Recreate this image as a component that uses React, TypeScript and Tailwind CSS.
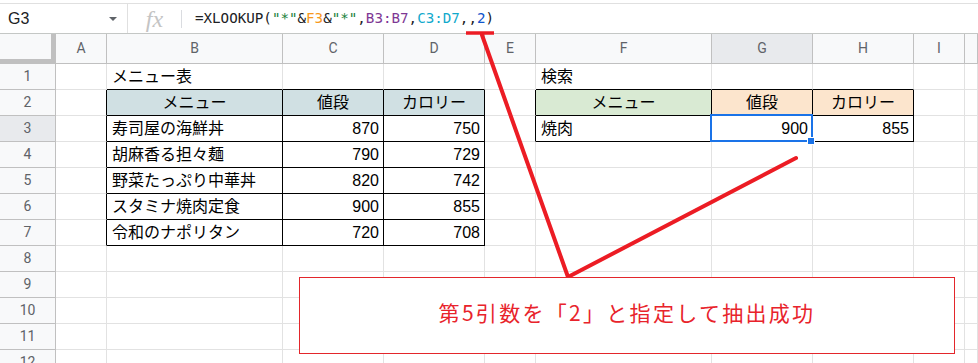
import React from 'react';

const COLS = ['', 'A', 'B', 'C', 'D', 'E', 'F', 'G', 'H', 'I', ''];
const ROWS = [1, 2, 3, 4, 5, 6, 7, 8, 9, 10, 11, 12];

type Cell = { text: string; align?: 'left' | 'right' | 'center'; bg?: string };

// cell contents keyed by "row-col"
const DATA: Record<string, Cell> = {
  '1-2': { text: 'メニュー表' },
  '2-2': { text: 'メニュー', align: 'center', bg: 'bg-[#d0e0e3]' },
  '2-3': { text: '値段', align: 'center', bg: 'bg-[#d0e0e3]' },
  '2-4': { text: 'カロリー', align: 'center', bg: 'bg-[#d0e0e3]' },
  '3-2': { text: '寿司屋の海鮮丼' },
  '3-3': { text: '870', align: 'right' },
  '3-4': { text: '750', align: 'right' },
  '4-2': { text: '胡麻香る担々麺' },
  '4-3': { text: '790', align: 'right' },
  '4-4': { text: '729', align: 'right' },
  '5-2': { text: '野菜たっぷり中華丼' },
  '5-3': { text: '820', align: 'right' },
  '5-4': { text: '742', align: 'right' },
  '6-2': { text: 'スタミナ焼肉定食' },
  '6-3': { text: '900', align: 'right' },
  '6-4': { text: '855', align: 'right' },
  '7-2': { text: '令和のナポリタン' },
  '7-3': { text: '720', align: 'right' },
  '7-4': { text: '708', align: 'right' },
  '1-6': { text: '検索' },
  '2-6': { text: 'メニュー', align: 'center', bg: 'bg-[#d9ead3]' },
  '2-7': { text: '値段', align: 'center', bg: 'bg-[#fce5cd]' },
  '2-8': { text: 'カロリー', align: 'center', bg: 'bg-[#fce5cd]' },
  '3-6': { text: '焼肉' },
  '3-7': { text: '900', align: 'right' },
  '3-8': { text: '855', align: 'right' },
};

const boxed = (r: number, c: number) =>
  (r >= 2 && r <= 7 && c >= 2 && c <= 4) || (r >= 2 && r <= 3 && c >= 6 && c <= 8);

const font = { fontFamily: '"Liberation Sans", "Noto Sans CJK JP", sans-serif' };

export default function App() {
  return (
    <div className="relative w-[978px] h-[363px] overflow-hidden bg-white" style={font}>
      {/* formula bar */}
      <div className="h-[34px] pt-[3px] border-b border-[#c4c7c5]">
        <div className="h-[30px] border-t border-[#e0e0e0] flex items-center">
          <div className="w-[128px] flex items-center pl-[8px] pr-[10px] h-full border-r border-[#e0e0e0]">
            <span className="text-[16px] text-[#202124] flex-1">G3</span>
            <span className="w-0 h-0 border-l-[4px] border-r-[4px] border-t-[4px] border-l-transparent border-r-transparent border-t-[#5f6368]" />
          </div>
          <div className="w-[54px] flex items-center justify-center h-[18px] border-r border-[#dadce0]">
            <span className="text-[24px] italic text-[#c4c4c4] leading-none" style={{ fontFamily: '"Liberation Serif", serif' }}>
              fx
            </span>
          </div>
          <div className="pl-[13px] text-[14.2px] text-[#202124]" style={{ fontFamily: '"DejaVu Sans Mono", monospace' }}>
            =XLOOKUP(<span className="text-[#188038]">"*"</span>&amp;<span className="text-[#f7981d]">F3</span>&amp;
            <span className="text-[#188038]">"*"</span>,<span className="text-[#7e3794]">B3:B7</span>,
            <span className="text-[#11a9cc]">C3:D7</span>,,<span className="text-[#1155cc]">2</span>)
          </div>
        </div>
      </div>

      {/* sheet grid */}
      <div className="grid grid-cols-[56px_51px_176px_101px_101px_51px_176px_101px_101px_51px_1fr] grid-rows-[30px_repeat(12,26px)]">
        {COLS.map((c, i) =>
          i === 0 ? (
            <div key="corner" className="bg-[#f8f9fa] border-r-[5px] border-b-[5px] border-[#c0c0c0]" />
          ) : (
            <div
              key={`h${i}`}
              className={`flex items-center justify-center border-r border-b border-[#c0c0c0] text-[14px] text-[#5f6368] ${
                i === 7 ? 'bg-[#e8eaed]' : 'bg-[#f8f9fa]'
              }`}
              style={{ fontFamily: 'Roboto, sans-serif' }}
            >
              {c}
            </div>
          )
        )}
        {ROWS.map(r =>
          COLS.map((_, c) => {
            if (c === 0)
              return (
                <div
                  key={`${r}-0`}
                  className={`flex items-center justify-center border-r border-b border-[#c0c0c0] text-[14px] text-[#5f6368] ${
                    r === 3 ? 'bg-[#e8eaed]' : 'bg-[#f8f9fa]'
                  }`}
                  style={{ fontFamily: 'Roboto, sans-serif' }}
                >
                  {r}
                </div>
              );
            const cell = DATA[`${r}-${c}`];
            const rb = boxed(r, c) || boxed(r, c + 1) ? 'border-r-black' : 'border-r-[#e2e2e2]';
            const bb = boxed(r, c) || boxed(r + 1, c) ? 'border-b-black' : 'border-b-[#e2e2e2]';
            const al =
              cell?.align === 'right' ? 'justify-end pr-[4px]' : cell?.align === 'center' ? 'justify-center' : 'pl-[5px]';
            return (
              <div
                key={`${r}-${c}`}
                className={`flex items-center whitespace-nowrap overflow-visible border-r border-b text-[16px] text-black ${rb} ${bb} ${al} ${
                  cell?.bg ?? ''
                }`}
              >
                {cell?.text}
              </div>
            );
          })
        )}
      </div>

      {/* selected cell G3 */}
      <div className="absolute left-[710px] top-[114px] w-[103px] h-[28px] border-2 border-[#1a73e8] pointer-events-none" />
      <div className="absolute left-[807px] top-[137px] w-[8px] h-[8px] bg-[#1a73e8] border border-white pointer-events-none" />

      {/* annotation lines */}
      <svg className="absolute left-0 top-0 pointer-events-none" width="978" height="363">
        <line x1="466" y1="33" x2="494" y2="33" stroke="#ec1c24" strokeWidth="3.5" />
        <line x1="482" y1="35" x2="568" y2="277" stroke="#ec1c24" strokeWidth="4" strokeLinecap="round" />
        <line x1="568" y1="277" x2="796" y2="158" stroke="#ec1c24" strokeWidth="4" strokeLinecap="round" />
      </svg>

      {/* callout */}
      <div className="absolute left-[299px] top-[277px] w-[656px] h-[77px] bg-white border-[1.5px] border-[#e3262b] flex items-center justify-center pb-[6px]">
        <span
          className="text-[21px] text-[#e8232b] tracking-[2.3px]"
          style={{ fontFamily: '"Noto Sans CJK JP", sans-serif' }}
        >
          第5引数を「2」と指定して抽出成功
        </span>
      </div>
    </div>
  );
}
